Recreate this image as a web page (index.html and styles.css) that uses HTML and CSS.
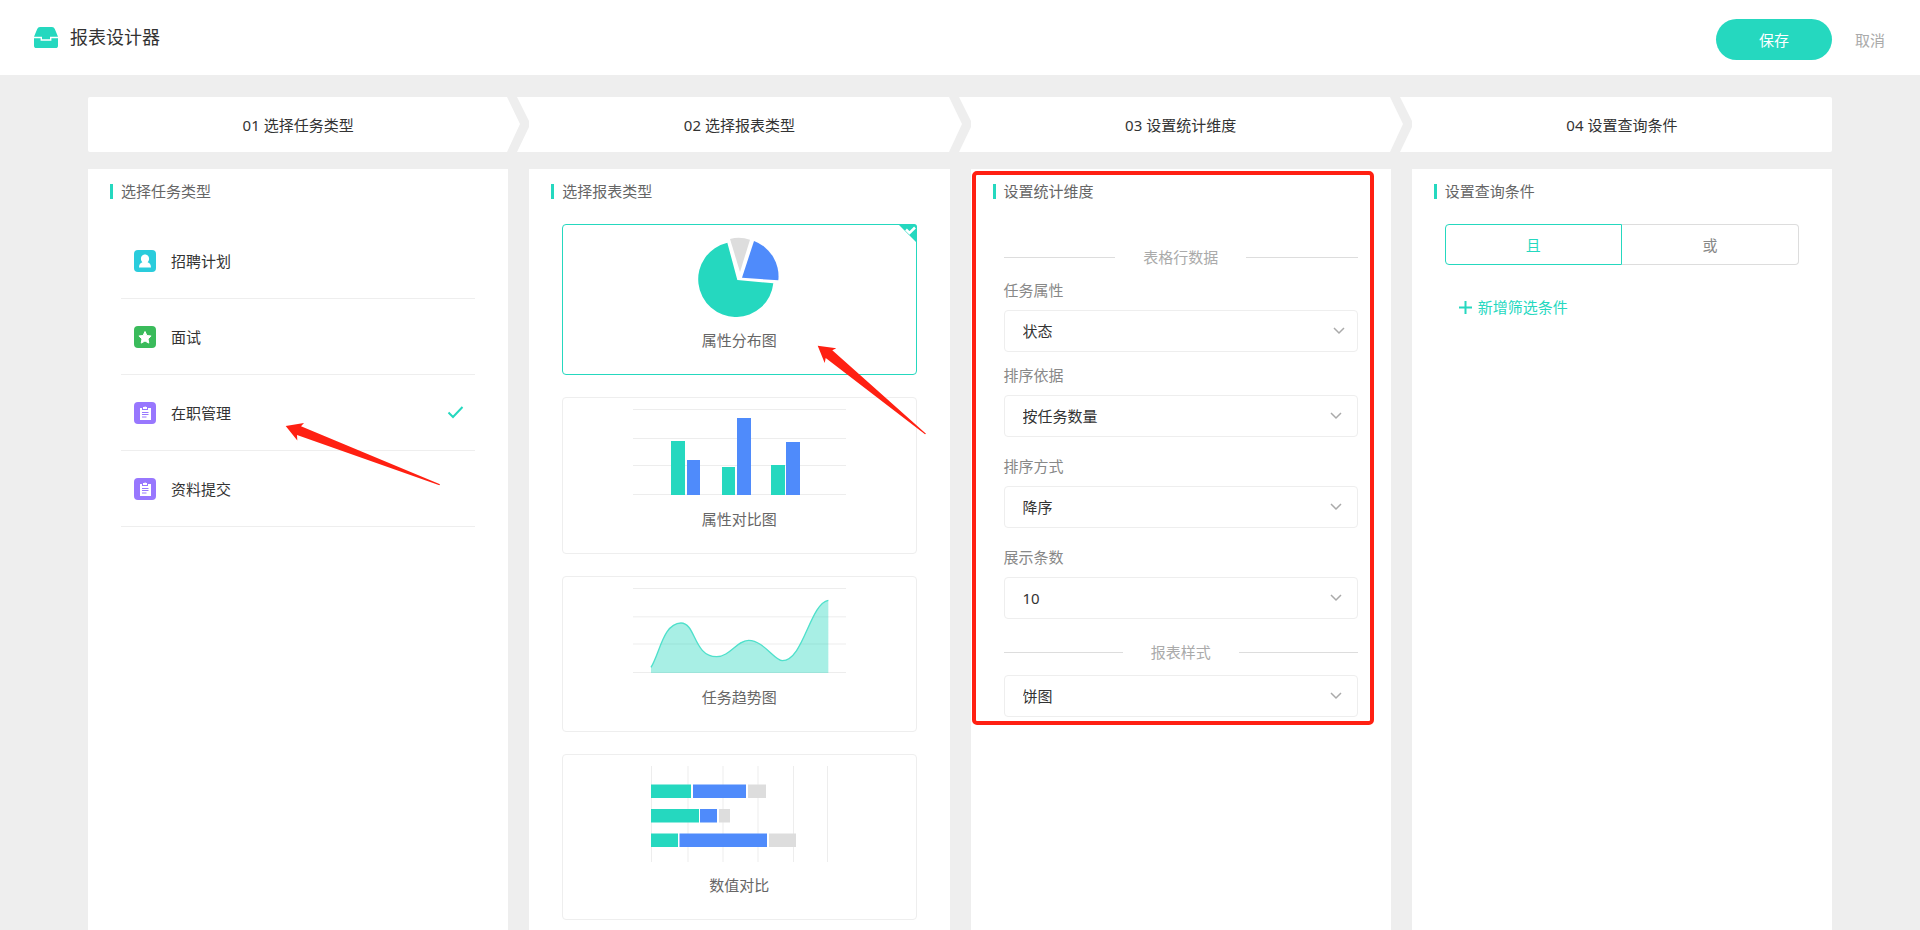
FILE: index.html
```html
<!DOCTYPE html>
<html lang="zh-CN">
<head>
<meta charset="utf-8">
<title>报表设计器</title>
<link rel="stylesheet" href="styles.css">
</head>
<body>
<header class="topbar">
  <svg class="logo" width="24" height="21" viewBox="0 0 24 20" preserveAspectRatio="none" aria-hidden="true">
    <path d="M6 0h12q2 0 2.800 1.800L24 9.300h-8v2.400H8V9.300H0L3.200 1.800Q4 0 6 0z"/>
    <path d="M0 10.700h6.600v2.500h10.800v-2.500H24V17.500q0 2.500-2.500 2.500h-19q-2.500 0-2.500-2.500z"/>
  </svg>
  <h1 class="brand">报表设计器</h1>
  <div class="actions">
    <button class="save" type="button">保存</button>
    <button class="cancel" type="button">取消</button>
  </div>
</header>

<main class="page">
  <ol class="steps">
    <li class="step">01 选择任务类型</li>
    <li class="step">02 选择报表类型<svg class="sep" viewBox="0 0 22 55" preserveAspectRatio="none" aria-hidden="true"><path d="M0 0h10l12 24v6L10 55H0l13-28z"/></svg></li>
    <li class="step">03 设置统计维度<svg class="sep" viewBox="0 0 22 55" preserveAspectRatio="none" aria-hidden="true"><path d="M0 0h10l12 24v6L10 55H0l13-28z"/></svg></li>
    <li class="step">04 设置查询条件<svg class="sep" viewBox="0 0 22 55" preserveAspectRatio="none" aria-hidden="true"><path d="M0 0h10l12 24v6L10 55H0l13-28z"/></svg></li>
  </ol>

  <div class="panels">
    <section class="panel">
      <h2 class="panel-title">选择任务类型</h2>
      <ul class="tasks">
        <li><button class="task" type="button">
          <svg width="22" height="22" viewBox="0 0 22 22" aria-hidden="true"><rect width="22" height="22" rx="4" fill="#2accdc"/><path d="M11 4.600c2.500 0 4.100 1.900 4.100 4.200 0 1.500-.7 2.700-1.500 3.500 2.200.7 3.300 2.200 3.400 5.200H5c.1-3 1.200-4.500 3.400-5.200-.8-.8-1.500-2-1.500-3.500 0-2.300 1.600-4.200 4.100-4.200z" fill="#fff"/></svg>
          <span>招聘计划</span></button></li>
        <li><button class="task" type="button">
          <svg width="22" height="22" viewBox="0 0 22 22" aria-hidden="true"><rect width="22" height="22" rx="4" fill="#3abb5b"/><path d="M11 5.500l1.900 4 4.200.5-3.100 2.900.8 4.200-3.800-2.100-3.800 2.100.8-4.200L4.900 10l4.200-.5z" fill="#fff" stroke="#fff" stroke-linejoin="round"/></svg>
          <span>面试</span></button></li>
        <li><button class="task" type="button">
          <svg width="22" height="22" viewBox="0 0 22 22" aria-hidden="true"><rect width="22" height="22" rx="4" fill="#9877fe"/><path d="M6 6h2v2h6V6h3v12H6z" fill="#fff"/><path d="M9 5h1q1.200-1.200 2.400 0H13v2H9z" fill="#fff"/><path d="M8 10.500h6.500M8 12.500h6.500M8 15h4.500" stroke="#9877fe"/></svg>
          <span>在职管理</span>
          <svg class="tick" width="17" height="13" viewBox="0 0 17 13" aria-hidden="true"><path d="M1.500 6.500L6 11l9.500-10"/></svg></button></li>
        <li><button class="task" type="button">
          <svg width="22" height="22" viewBox="0 0 22 22" aria-hidden="true"><rect width="22" height="22" rx="4" fill="#9877fe"/><path d="M6 6h2v2h6V6h3v12H6z" fill="#fff"/><path d="M9 5h1q1.200-1.200 2.400 0H13v2H9z" fill="#fff"/><path d="M8 10.500h6.500M8 12.500h6.500M8 15h4.500" stroke="#9877fe"/></svg>
          <span>资料提交</span></button></li>
      </ul>
      <svg class="arrow arrow-task" width="156" height="64" viewBox="0 0 156 64" aria-hidden="true"><path d="M.7 5l18.300-3-3 3.200L155 63.300l-.6 1L12 14l.3 5.500z"/></svg>
    </section>

    <section class="panel">
      <h2 class="panel-title">选择报表类型</h2>
      <div class="cards">
        <button class="card selected" type="button">
          <svg width="82" height="81" viewBox="534 229 246 243" aria-hidden="true">
            <path d="M652 361L622 249A113 113 0 1 0 760 371z" fill="#25d8bf"/>
            <path d="M660 337L630 238Q660 230 690 240z" fill="#ddd"/>
            <path d="M666 354L702 244A113 113 0 0 1 775 362z" fill="#4f8bfb"/>
          </svg>
          <span>属性分布图</span>
          <svg class="corner" width="19" height="19" viewBox="0 0 19 19" aria-hidden="true"><path d="M0 0h16q3 0 3 3v16z" fill="#25d8bf"/><path d="M8 5.500L11.500 9 17 3.500" fill="none" stroke="#fff" stroke-width="2.500"/></svg>
        </button>
        <button class="card" type="button">
          <svg width="213" height="87" viewBox="0 0 213 87" aria-hidden="true">
            <path d="M0 .5h213M0 29.500h213M0 56.500h213M0 85.500h213" stroke="#ededed"/>
            <path d="M38 32h14v54H38zM89 58h13v28H89zM138 56h14v30h-14z" fill="#25d8bf"/>
            <path d="M54 51h13v35H54zM104 9h14v77h-14zM153 33h14v53h-14z" fill="#4f8bfb"/>
          </svg>
          <span>属性对比图</span>
        </button>
        <button class="card" type="button">
          <svg width="213" height="86" viewBox="279 84 639 258" aria-hidden="true">
            <path d="M279 85.500h639M279 170.500h639M279 252h639M279 337.500h639" stroke="#ededed" stroke-width="3"/>
            <path d="M333 322C360 278 370 190 423 189C468 189 460 290 530 290C570 290 590 241 626 241C670 241 704 302 727 302C790 302 810 130 865 121V339H333z" fill="#25d8bf" fill-opacity=".4"/>
            <path d="M333 322C360 278 370 190 423 189C468 189 460 290 530 290C570 290 590 241 626 241C670 241 704 302 727 302C790 302 810 130 865 121" fill="none" stroke="#4fe0cb" stroke-width="4"/>
          </svg>
          <span>任务趋势图</span>
        </button>
        <button class="card" type="button">
          <svg width="177" height="96" viewBox="0 0 177 96" aria-hidden="true">
            <path d="M.5 0v96M37 0v96M72 0v96M107 0v96M142.500 0v96M176.500 0v96" stroke="#ededed"/>
            <path d="M0 18.500h40V32H0zM0 43h48v13.500H0zM0 67.500h27V81H0z" fill="#25d8bf"/>
            <path d="M42 18.500h53V32H42zM49 43h17v13.500H49zM28.500 67.500H116V81H28.500z" fill="#4f8bfb"/>
            <path d="M97 18.500h18V32H97zM68 43h11v13.500H68zM118 67.500h27V81h-27z" fill="#ddd"/>
          </svg>
          <span>数值对比</span>
        </button>
      </div>
      <svg class="arrow arrow-card" width="110" height="90" viewBox="0 0 110 90" aria-hidden="true"><path d="M.7.700l18.600 2.600-4 2L109 88.700l-1 .6L8.700 13l-1 5z"/></svg>
    </section>

    <section class="panel">
      <h2 class="panel-title">设置统计维度</h2>
      <form class="dimensions">
        <div class="divider">表格行数据</div>
        <div class="field tight">
          <label for="attr">任务属性</label>
          <select id="attr"><option>状态</option></select>
        </div>
        <div class="field">
          <label for="sort">排序依据</label>
          <select id="sort"><option>按任务数量</option></select>
        </div>
        <div class="field">
          <label for="order">排序方式</label>
          <select id="order"><option>降序</option></select>
        </div>
        <div class="field last">
          <label for="count">展示条数</label>
          <select id="count"><option>10</option></select>
        </div>
        <div class="divider">报表样式</div>
        <select class="style-select" aria-label="报表样式"><option>饼图</option></select>
      </form>
      <div class="frame"></div>
    </section>

    <section class="panel">
      <h2 class="panel-title">设置查询条件</h2>
      <div class="segment">
        <button class="on" type="button">且</button>
        <button type="button">或</button>
      </div>
      <button class="add" type="button">
        <svg width="13" height="13" viewBox="0 0 13 13" aria-hidden="true"><path d="M6.500 0v13M0 6.500h13"/></svg>
        新增筛选条件
      </button>
    </section>
  </div>
</main>
</body>
</html>
```

FILE: styles.css
```css
* {
  box-sizing: border-box;
}

body {
  margin: 0;
  min-height: 100vh;
  display: flex;
  flex-direction: column;
  background: #eee;
  color: #333;
  font: 15px/22px "Noto Sans", "Noto Sans CJK SC", sans-serif;
}

h1, h2, ol, ul {
  margin: 0;
  padding: 0;
  font-weight: 400;
  list-style: none;
}

button, select {
  font: inherit;
  color: inherit;
  background: #fff;
  border: 0;
  padding: 0;
  cursor: pointer;
}

/* Header */
.topbar {
  display: flex;
  align-items: center;
  height: 75px;
  padding: 0 35px 1px 34px;
  background: #fff;
}

.logo {
  fill: #25d8bf;
}

.brand {
  flex: 1;
  margin-left: 12px;
  font-size: 18px;
}

.actions {
  display: flex;
  align-items: center;
  gap: 23px;
  padding-top: 5px;
}

.save {
  width: 116px;
  height: 41px;
  border-radius: 21px;
  background: #25d8bf;
  color: #fff;
}

.cancel {
  color: #aaa;
}

/* Steps */
.page {
  flex: 1;
  display: flex;
  flex-direction: column;
  gap: 17px;
  padding: 22px 88px 0;
}

.steps,
.panels {
  display: grid;
  grid-template-columns: repeat(4, minmax(0, 1fr));
  column-gap: 21px;
}

.steps {
  background: #fff;
  border-radius: 2px;
}

.step {
  position: relative;
  height: 55px;
  display: flex;
  align-items: center;
  justify-content: center;
}

.sep {
  position: absolute;
  right: 100%;
  top: 0;
  width: 22px;
  height: 55px;
  fill: #eee;
}

/* Panels */
.panels {
  flex: 1;
}

.panel {
  position: relative;
  padding: 11px 33px 10px;
  background: #fff;
}

.panel-title {
  display: flex;
  align-items: center;
  gap: 8px;
  margin: 0 0 21px -11px;
  font-size: 15px;
  color: #666;
}

.panel-title::before {
  content: "";
  width: 3px;
  height: 15px;
  background: #25d8bf;
}

/* Task list */
.task {
  display: flex;
  align-items: center;
  width: 100%;
  height: 76px;
  padding: 0 11px 0 13px;
  border-bottom: 1px solid #eee;
  text-align: left;
}

.task span {
  flex: 1;
  margin-left: 15px;
}

.tick {
  fill: none;
  stroke: #25d8bf;
  stroke-width: 2;
}

/* Report cards */
.cards {
  display: flex;
  flex-direction: column;
  gap: 22px;
  padding-top: 1px;
}

.card {
  position: relative;
  display: flex;
  flex-direction: column;
  align-items: center;
  gap: 12px;
  padding: 11px 0 23px;
  border: 1px solid #eee;
  border-radius: 4px;
  color: #666;
}

.card.selected {
  border-color: #25d8bf;
}

.corner {
  position: absolute;
  top: -1px;
  right: -1px;
}

/* Dimension form */
.dimensions {
  padding-top: 23px;
}

.divider {
  display: flex;
  align-items: center;
  gap: 28px;
  color: #aaa;
}

.divider::before,
.divider::after {
  content: "";
  flex: 1;
  height: 1px;
  background: #ddd;
}

.field {
  display: flex;
  flex-direction: column;
  gap: 9px;
  margin-bottom: 18px;
  color: #888;
}

.field.tight {
  margin: 11px 0 12px;
}

.field.last {
  margin-bottom: 22px;
}

select {
  appearance: none;
  width: 100%;
  height: 42px;
  padding: 0 18px;
  border: 1px solid #eee;
  border-radius: 4px;
  color: #333;
  background: #fff url("data:image/svg+xml,%3Csvg xmlns='http://www.w3.org/2000/svg' width='12' height='8'%3E%3Cpath d='M1 1l5 5 5-5' fill='none' stroke='%23aaa' stroke-width='1.500'/%3E%3C/svg%3E") no-repeat right 15px center;
}

.tight select {
  background-position: right 12px center;
}

.style-select {
  margin-top: 12px;
}

/* Query conditions */
.segment {
  display: grid;
  grid-template-columns: 1fr 1fr;
  padding-top: 1px;
}

.segment button {
  height: 41px;
  border: 1px solid #ddd;
  border-left: 0;
  border-radius: 0 4px 4px 0;
  color: #888;
}

.segment .on {
  border: 1px solid #25d8bf;
  border-radius: 4px 0 0 4px;
  color: #25d8bf;
}

.add {
  display: flex;
  align-items: center;
  gap: 6px;
  margin: 31px 0 0 14px;
  color: #25d8bf;
}

.add svg {
  stroke: currentColor;
  stroke-width: 2;
}

/* Callout marks over the panels */
.arrow,
.frame {
  position: absolute;
  pointer-events: none;
}

.arrow {
  fill: #ff2012;
  overflow: visible;
}

.arrow-task {
  left: 197px;
  top: 252px;
}

.arrow-card {
  left: 288px;
  top: 176px;
}

.frame {
  top: 2px;
  left: 1px;
  right: 17px;
  height: 554px;
  border: 4px solid #ff2012;
  border-radius: 5px;
}
```
